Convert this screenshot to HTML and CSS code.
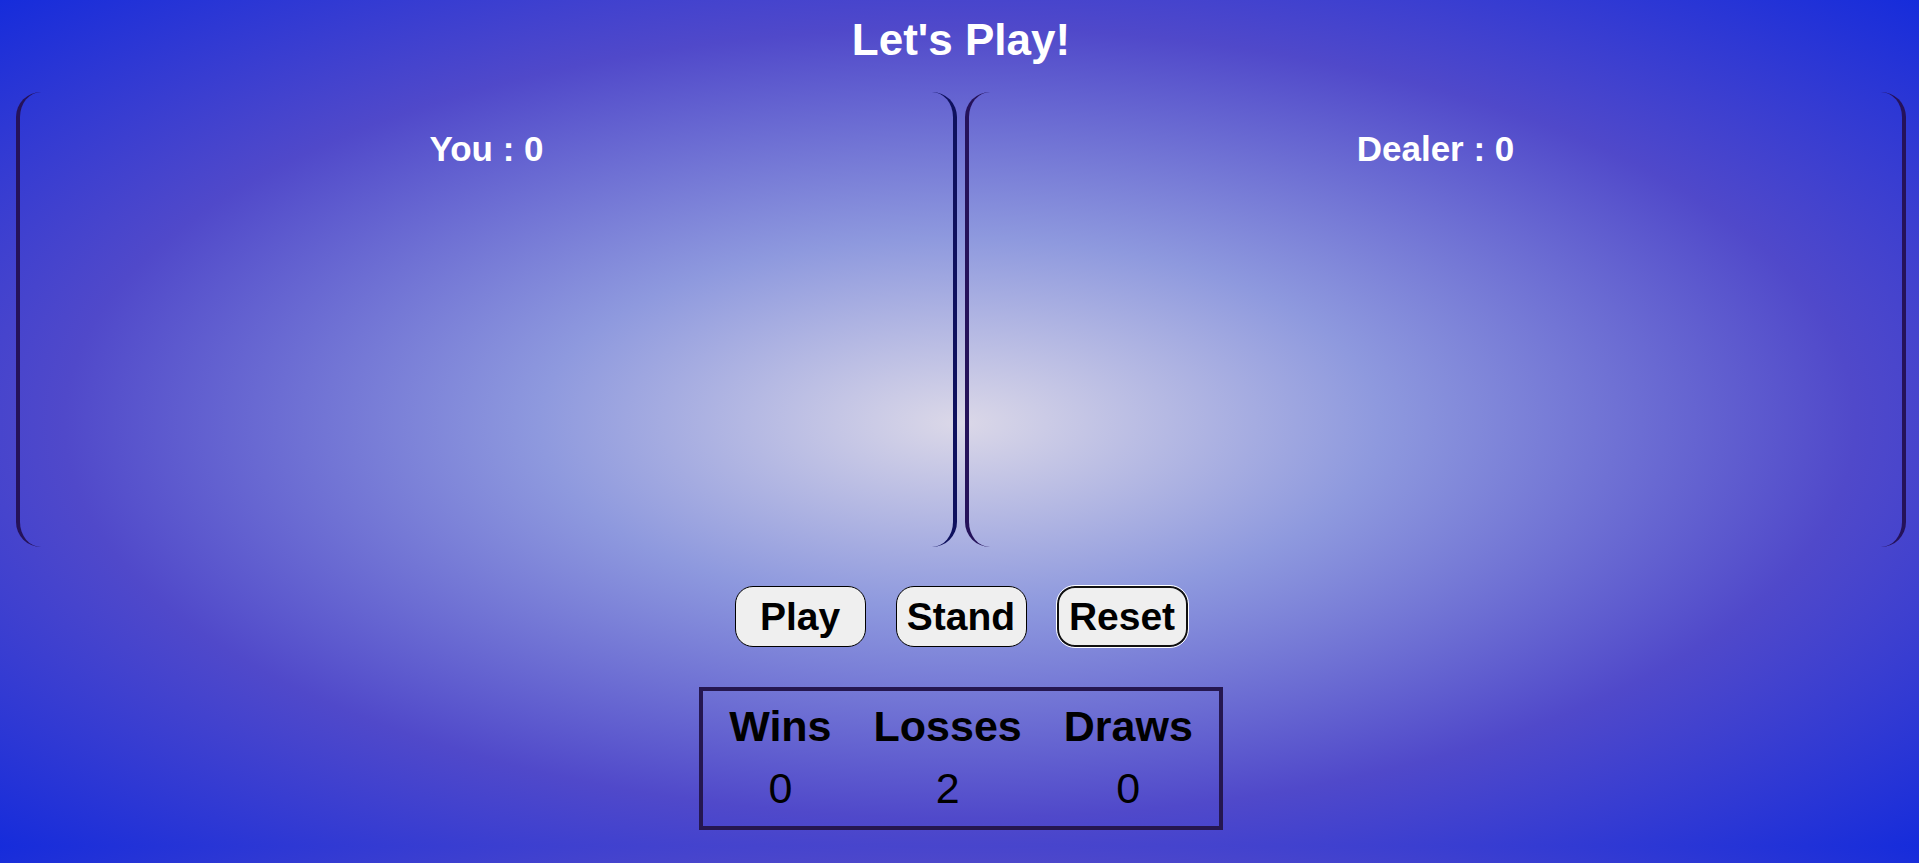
FILE: index.html
```html
<!DOCTYPE html>
<html lang="en">
<head>
<meta charset="utf-8">
<title>Blackjack</title>
<link rel="stylesheet" href="styles.css">
</head>
<body>
<main class="game">
  <h1 class="title">Let's Play!</h1>
  <div class="boards">
    <section class="board board-you"><h2 class="score">You : 0</h2></section>
    <section class="board board-dealer"><h2 class="score">Dealer : 0</h2></section>
  </div>
  <div class="actions">
    <button class="action" type="button">Play</button>
    <button class="action" type="button">Stand</button>
    <button class="action action-current" type="button">Reset</button>
  </div>
  <table class="results">
    <thead><tr><th scope="col">Wins</th><th scope="col">Losses</th><th scope="col">Draws</th></tr></thead>
    <tbody><tr><td>0</td><td>2</td><td>0</td></tr></tbody>
  </table>
</main>
</body>
</html>
```
FILE: styles.css
```css
* {
  box-sizing: border-box;
}

html {
  background: radial-gradient(#dbd8e8, #8e99de 31%, #5049ca 66%, #162cdb);
}

body {
  margin: 0;
  padding: 0 13px 16px 16px;
  font-family: "Liberation Sans", Arial, sans-serif;
}

.title {
  margin: 0;
  padding-top: 14px;
  color: #fff;
  font-size: 44px;
  line-height: 52px;
  text-align: center;
}

.boards {
  display: grid;
  grid-template-columns: 1fr 1fr;
  gap: 8px;
  margin-top: 26px;
}

.board {
  min-height: 455px;
  padding-top: 35px;
  border: 0 solid #25125a;
  border-width: 0 4px;
  border-radius: 25px;
}

.board-you {
  border-right-color: #0f115e;
}

.score {
  margin: 0;
  color: #fff;
  font-size: 35px;
  line-height: 44px;
  text-align: center;
}

.actions {
  display: flex;
  justify-content: center;
  gap: 30px;
  margin-top: 39px;
}

.action {
  width: 131px;
  height: 61px;
  padding: 0;
  border: 1px solid #000;
  border-radius: 18px;
  background: #efefef;
  color: #000;
  font: bold 39px "Liberation Sans", Arial, sans-serif;
}

.action-current {
  border-width: 2px;
  border-color: #101010;
  outline: 1px solid #fff;
}

.results {
  margin: 40px auto 0;
  padding: 3px 4px 6px;
  border: 4px solid #251750;
  border-spacing: 2px;
  font-size: 43px;
  line-height: 52px;
  text-align: center;
}

.results th,
.results td {
  padding: 4px 20px;
}
```
